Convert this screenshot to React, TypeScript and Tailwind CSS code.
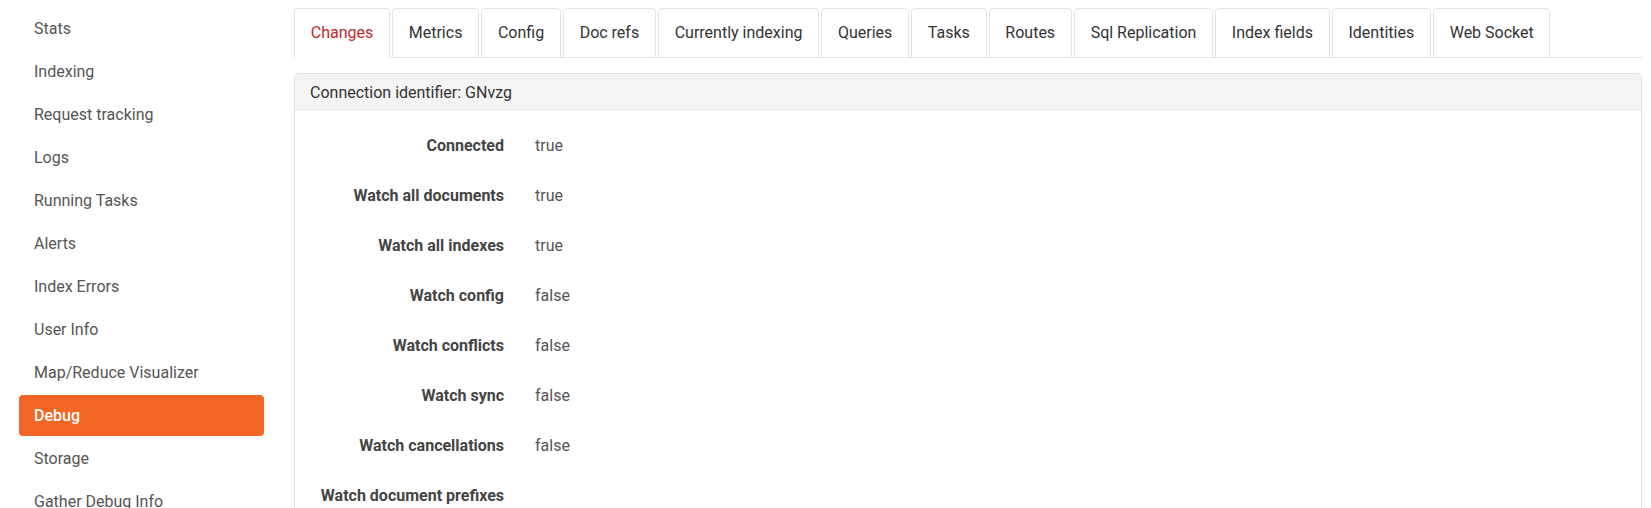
import React from 'react';

const navItems = [
  'Stats',
  'Indexing',
  'Request tracking',
  'Logs',
  'Running Tasks',
  'Alerts',
  'Index Errors',
  'User Info',
  'Map/Reduce Visualizer',
  'Debug',
  'Storage',
  'Gather Debug Info',
];

const tabs = [
  'Changes',
  'Metrics',
  'Config',
  'Doc refs',
  'Currently indexing',
  'Queries',
  'Tasks',
  'Routes',
  'Sql Replication',
  'Index fields',
  'Identities',
  'Web Socket',
];

const rows = [
  { label: 'Connected', value: 'true' },
  { label: 'Watch all documents', value: 'true' },
  { label: 'Watch all indexes', value: 'true' },
  { label: 'Watch config', value: 'false' },
  { label: 'Watch conflicts', value: 'false' },
  { label: 'Watch sync', value: 'false' },
  { label: 'Watch cancellations', value: 'false' },
  { label: 'Watch document prefixes', value: '' },
];

const App: React.FC = () => {
  const activeNav = 'Debug';
  const activeTab = 'Changes';

  return (
    <div className="flex w-[1651px] h-[508px] overflow-hidden bg-white font-['Roboto',sans-serif] text-[16px]">
      {/* Sidebar */}
      <aside className="w-[294px] shrink-0 pl-[19px] pr-[30px] pt-[8px]">
        <ul className="flex flex-col gap-[2px]">
          {navItems.map((item) => (
            <li key={item}>
              <a
                className={
                  item === activeNav
                    ? 'flex h-[41px] items-center rounded-[4px] bg-[#f26625] px-[15px] font-medium text-white'
                    : 'flex h-[41px] items-center rounded-[4px] px-[15px] text-[#555555]'
                }
              >
                {item}
              </a>
            </li>
          ))}
        </ul>
      </aside>

      {/* Main */}
      <main className="flex-1 pr-[9px] pt-[8px]">
        <ul className="flex h-[50px] border-b border-[#e3e3e3]">
          {tabs.map((tab) => (
            <li key={tab} className="mr-[2px]">
              <a
                className={
                  tab === activeTab
                    ? 'flex h-[50px] items-center rounded-t-[4px] border border-[#e3e3e3] border-b-white bg-white px-[15.75px] text-[#c0282d]'
                    : 'flex h-[50px] items-center rounded-t-[4px] border border-[#e3e3e3] bg-white px-[15.75px] text-[#333333]'
                }
              >
                {tab}
              </a>
            </li>
          ))}
        </ul>

        <section className="mt-[15px] h-[500px] rounded-[4px] border border-[#e3e3e3]">
          <div className="flex h-[37px] items-center rounded-t-[4px] bg-[#f4f4f4] px-[15px] text-[#333333]">
            Connection identifier: GNvzg
          </div>
          <dl className="pt-[10px]">
            {rows.map((row) => (
              <div key={row.label} className="flex h-[50px] items-center">
                <dt className="w-[209px] shrink-0 text-right font-bold text-[#444444]">{row.label}</dt>
                <dd className="ml-[31px] text-[#555555]">{row.value}</dd>
              </div>
            ))}
          </dl>
        </section>
      </main>
    </div>
  );
};

export default App;
